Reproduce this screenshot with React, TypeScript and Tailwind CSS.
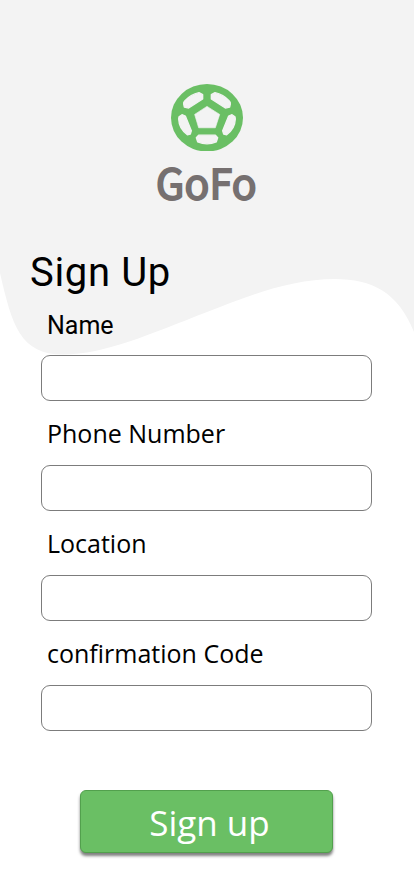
const openSans = 'font-["Open_Sans",sans-serif]';
const roboto = "font-[Roboto,sans-serif]";

function Ball() {
  return (
    <svg className="mt-[83.5px] h-[67.5px] w-[72px]" viewBox="93 41 216 202" preserveAspectRatio="none">
      <ellipse cx="201" cy="142" rx="108" ry="101" fill="#6abf64" />
      <g fill="#f3f3f3" stroke="#f3f3f3" strokeLinejoin="round">
        <path strokeWidth="2" d="M201 108L239 132L226 172H176L164 132Z" />
        <path strokeWidth="4" d="M131 101Q130 96 134 92Q152 72 177 67L188 73V86L146 113L133 110Z" />
        <path strokeWidth="4" d="M271 101Q272 96 268 92Q250 72 225 67L214 73V86L256 113L269 110Z" />
        <path strokeWidth="4" d="M117 139L126 133L136 137L154 181L151 191L142 193Q117 175 116 146Z" />
        <path strokeWidth="4" d="M285 139L276 133L266 137L248 181L251 191L260 193Q285 175 286 146Z" />
        <path strokeWidth="4" d="M176 194H226L233 202L229 214Q201 226 173 214L169 202Z" />
      </g>
    </svg>
  );
}

function Field({ label, id, font }: { label: string; id: string; font: string }) {
  return (
    <div className="flex h-[110px] flex-col">
      <label htmlFor={id} className={`flex h-[60px] items-center pl-1.5 text-[25px] leading-none text-black ${font}`}>
        {label}
      </label>
      <input id={id} className="h-[46px] w-[331px] rounded-[9px] border border-[#7c7c7c] bg-white px-3 outline-none" />
    </div>
  );
}

export default function App() {
  return (
    <main className="relative isolate flex h-[896px] w-[414px] flex-col overflow-hidden bg-white">
      <svg className="absolute inset-0 -z-10 h-[360px] w-[414px]" viewBox="0 0 414 360">
        <path
          fill="#f3f3f3"
          d="M0 0H414V332C398 292 372 279 335 279C290 279 245 297 207 312C150 334 105 354.5 63 354.5C20 354.5 12 325 0 273Z"
        />
      </svg>
      <header className="flex h-[242px] flex-col items-center">
        <Ball />
        <div className='pr-px text-[41px] leading-[60px] font-normal tracking-[0.2px] text-[#767070] [-webkit-text-stroke:1.9px_#767070] font-["Noto_Sans_CJK_JP",sans-serif]'>
          GoFo
        </div>
      </header>
      <h1 className={`h-[53px] pt-px pl-[30px] text-[40px] leading-[60px] tracking-[0.65px] text-black ${roboto}`}>
        Sign Up
      </h1>
      <form className="flex flex-col pl-[41px]">
        <Field id="name" label="Name" font={roboto} />
        <Field id="phone" label="Phone Number" font={`${openSans} pb-1`} />
        <Field id="location" label="Location" font={`${openSans} pb-1`} />
        <Field id="code" label="confirmation Code" font={`${openSans} pb-1`} />
        <button
          type="button"
          className={`mt-[55px] ml-[39px] flex h-[63px] w-[253px] items-center justify-center rounded-[6px] border border-[#52a04d] bg-[#6abf64] pt-0.5 pl-1.5 text-[35px] leading-none text-white shadow-[0_3px_3px_rgba(0,0,0,0.5)] ${openSans}`}
        >
          Sign up
        </button>
      </form>
    </main>
  );
}
